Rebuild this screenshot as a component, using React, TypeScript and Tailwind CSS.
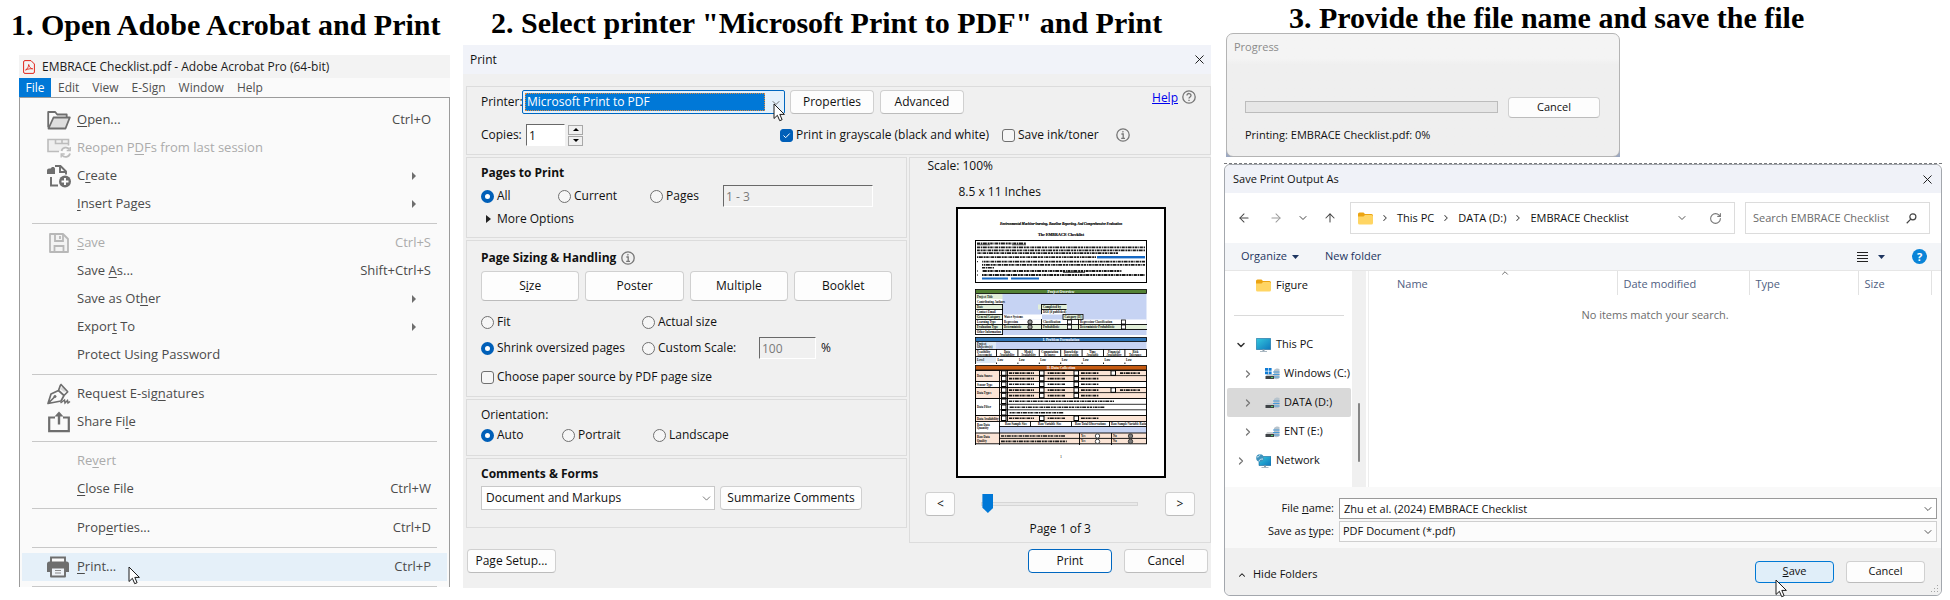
import React from "react";
import { ArrowLeft, ArrowRight, ArrowUp, ChevronDown, ChevronRight, ChevronUp, RotateCw, X } from "lucide-react";

/* ---------- shared pieces ---------- */

function StepTitle({ children, className }: { children: React.ReactNode; className: string }) {
  return (
    <h2 className={`whitespace-nowrap font-['Liberation_Serif',serif] text-[30px] leading-8 font-bold text-black ${className}`}>
      {children}
    </h2>
  );
}

function Cursor({ className }: { className: string }) {
  return (
    <svg viewBox="0 0 13 19" className={`pointer-events-none absolute h-[19px] w-[13px] ${className}`} aria-hidden="true">
      <path d="M1 1v14.5l3.4-3.2 2.3 5.4 2.4-1-2.3-5.3h4.6z" fill="#fff" stroke="#1b1b1b" strokeWidth="1" />
    </svg>
  );
}

function PushButton({ children, className = "" }: { children: React.ReactNode; className?: string }) {
  return (
    <button
      type="button"
      className={`shrink-0 rounded-[4px] border border-[#d0d0d0] border-b-[#bcbcbc] bg-[#fdfdfd] text-center whitespace-nowrap ${className}`}
    >
      {children}
    </button>
  );
}

function InfoIcon({ mark = "i" }: { mark?: "i" | "?" }) {
  return (
    <svg viewBox="0 0 14 14" className="size-[14px] shrink-0" fill="none" stroke="#767676" aria-hidden="true">
      <circle cx="7" cy="7" r="6.2" strokeWidth="1.3" />
      {mark === "i" ? (
        <>
          <path d="M5.4 6h1.8v4.2M5.2 10.3h3.8" strokeWidth="1.3" />
          <circle cx="6.9" cy="3.8" r=".5" strokeWidth=".8" />
        </>
      ) : (
        <path d="M5 5.4c0-2.6 4-2.4 4 0 0 1.5-2 1.5-2 3.2M7 9.8V11" strokeWidth="1.3" />
      )}
    </svg>
  );
}

/* ---------- step 1: Acrobat file menu ---------- */

const FolderOpenIcon = () => (
  <svg viewBox="0 0 24 20" className="h-5 w-6" aria-hidden="true">
    <path d="M1.2 17.5V2h7l2 2.5h9.500v3" fill="#fafafa" stroke="#6e6e6e" strokeWidth="1.8" strokeLinejoin="round" />
    <path d="M1.5 18.5 6.5 7.5h16.300l-4.300 11z" fill="#dedede" stroke="#6e6e6e" strokeWidth="1.8" strokeLinejoin="round" />
  </svg>
);

const ReopenIcon = () => (
  <svg viewBox="0 0 24 20" className="h-5 w-6" fill="none" stroke="#bcbcbc" aria-hidden="true">
    <path d="M12 13.5H1v-12h20.5v6" fill="#efefef" strokeWidth="1.6" />
    <path d="M8.5 1.5v4h13M15 1.500v4" strokeWidth="1.6" />
    <path d="M14.5 13a4.500 4.500 0 0 1 8-1.500M23 15.5a4.500 4.500 0 0 1-8 1.500" strokeWidth="1.8" />
    <path d="M23.2 9v3.500h-3.500M14.2 19.5V16h3.500" strokeWidth="1.4" />
  </svg>
);

const CreateIcon = () => (
  <svg viewBox="0 0 24 24" className="size-6" fill="none" stroke="#6e6e6e" aria-hidden="true">
    <path d="M0 6.5a2 2 0 0 1 2-2h1.500L5 3h2l1 1.500V10H0z" fill="#6e6e6e" stroke="none" />
    <path d="M8 2h5.500L19 7.500v3M13 2v6h6M4 13v8.500h7" strokeWidth="1.9" />
    <circle cx="18" cy="17.5" r="6" fill="#6e6e6e" stroke="none" />
    <path d="M18 14v7M14.500 17.5h7" stroke="#fff" strokeWidth="1.9" />
  </svg>
);

const FloppyIcon = () => (
  <svg viewBox="0 0 20 20" className="ml-0.5 size-5" fill="none" stroke="#b8b8b8" strokeWidth="1.8" aria-hidden="true">
    <path d="M1 1h13l5 5v13H1z" fill="#f3f3f3" strokeLinejoin="round" />
    <path d="M6 1v7h8V1M11 3v3M5.5 19v-6h9v6" />
  </svg>
);

const SignIcon = () => (
  <svg viewBox="0 0 24 22" className="h-[22px] w-6" fill="none" stroke="#6e6e6e" aria-hidden="true">
    <path d="m16 3 4 5-3 1-4-3z" fill="#d8d8d8" stroke="none" />
    <path d="M1 20.5 4 11l7.500-3.500 5.500 5-3 5.500zM1 20.5 7.500 14M11.5 7.5l2-5.500M17 12.500l4-4M13.5 1l7.500 8" strokeWidth="1.7" strokeLinejoin="round" />
    <circle cx="8" cy="13.5" r="1.2" fill="#6e6e6e" strokeWidth=".6" />
    <path d="m13.5 20 4-3 .5 3 2.500-2.500.5 2.500 2-1.500" strokeWidth="1.5" />
  </svg>
);

const ShareIcon = () => (
  <svg viewBox="0 0 24 22" className="h-[22px] w-6" fill="none" stroke="#6e6e6e" aria-hidden="true">
    <path d="M8 6.5H2.200v13.700h19.600V6.500H16" strokeWidth="2.200" />
    <path d="M12 13.5V3" strokeWidth="2.4" />
    <path d="M7.5 5.5 12 .5l4.500 5z" fill="#6e6e6e" stroke="none" />
  </svg>
);

const PrinterIcon = () => (
  <svg viewBox="0 0 22 22" className="size-[22px]" aria-hidden="true">
    <path d="M4 6V1.500h14V6" fill="#fafafa" stroke="#6e6e6e" strokeWidth="1.9" />
    <path d="M0 8a2.500 2.500 0 0 1 2.500-2.500h17A2.500 2.500 0 0 1 22 8v8h-3.500v-4h-15v4H0z" fill="#6e6e6e" />
    <path d="M4 11.5h14v9H4z" fill="#eef3f8" stroke="#6e6e6e" strokeWidth="1.9" strokeLinejoin="round" />
    <path d="M8 14.5h6M8 17h6" stroke="#8a8a8a" strokeWidth="1.2" />
  </svg>
);

type Item = { pre?: string; key?: string; post: string; combo?: string; sub?: boolean; off?: boolean; icon?: React.ReactNode };

const fileMenu: Item[][] = [
  [
    { key: "O", post: "pen...", combo: "Ctrl+O", icon: <FolderOpenIcon /> },
    { pre: "Reopen P", key: "D", post: "Fs from last session", off: true, icon: <ReopenIcon /> },
    { pre: "C", key: "r", post: "eate", sub: true, icon: <CreateIcon /> },
    { key: "I", post: "nsert Pages", sub: true },
  ],
  [
    { key: "S", post: "ave", combo: "Ctrl+S", off: true, icon: <FloppyIcon /> },
    { pre: "Save ", key: "A", post: "s...", combo: "Shift+Ctrl+S" },
    { pre: "Save as Ot", key: "h", post: "er", sub: true },
    { pre: "Expor", key: "t", post: " To", sub: true },
    { post: "Protect Using Password" },
  ],
  [
    { pre: "Request E-sig", key: "n", post: "atures", icon: <SignIcon /> },
    { pre: "Share Fi", key: "l", post: "e", icon: <ShareIcon /> },
  ],
  [
    { pre: "Re", key: "v", post: "ert", off: true },
    { key: "C", post: "lose File", combo: "Ctrl+W" },
  ],
  [{ pre: "Prop", key: "e", post: "rties...", combo: "Ctrl+D" }],
  [{ key: "P", post: "rint...", combo: "Ctrl+P", icon: <PrinterIcon /> }],
];

function MenuRow({ item }: { item: Item }) {
  const active = item.combo === "Ctrl+P";
  return (
    <button
      type="button"
      disabled={item.off}
      className={`relative mx-0.5 flex h-7 items-center pl-[25px] pr-4 text-left ${active ? "bg-[#e5f0f9]" : ""} ${item.off ? "text-[#ababab]" : "text-[#4b4b4b]"}`}
    >
      <span className="flex w-[30px] shrink-0 items-center">{item.icon}</span>
      <span className="flex-1 whitespace-pre">
        {item.pre}
        {item.key && <u className="underline-offset-2">{item.key}</u>}
        {item.post}
      </span>
      {item.combo && <span>{item.combo}</span>}
      {item.sub && (
        <svg viewBox="0 0 4 8" className="mr-[15px] h-2 w-1" aria-hidden="true">
          <path d="M0 0v8l4-4z" fill="#6e6e6e" />
        </svg>
      )}
      {active && <Cursor className="left-[106px] top-[13px]" />}
    </button>
  );
}

function AcrobatMenu() {
  return (
    <div className="ml-2 bg-[#fafafa]">
      <div className="flex h-[23px] items-center gap-[7px] bg-[#f3f3f3] pl-1 text-[12px] text-[#1b1b1b]">
        <svg viewBox="0 0 12 14" className="h-[14px] w-3" fill="none" stroke="#e1251b" aria-hidden="true">
          <path d="M2 .6h6L11.400 4v8a1.400 1.400 0 0 1-1.400 1.400H2A1.400 1.400 0 0 1 .6 12V2A1.400 1.400 0 0 1 2 .6z" />
          <path d="M2.500 10c2-1 3-3 3.200-5.500.6 2.500 2 4.200 4 4.300-2.500-.3-4.700.2-7.200 1.200z" strokeWidth=".9" strokeLinejoin="round" />
        </svg>
        <span className="whitespace-nowrap">EMBRACE Checklist.pdf - Adobe Acrobat Pro (64-bit)</span>
      </div>
      <nav className="flex h-[19px] gap-[13px] text-[12px] text-[#505050]">
        <button type="button" className="-mr-1.5 w-8 bg-[#0078d7] text-white">File</button>
        <button type="button">Edit</button>
        <button type="button">View</button>
        <button type="button">E-Sign</button>
        <button type="button">Window</button>
        <button type="button">Help</button>
      </nav>
      <div className="flex flex-col border-x border-t border-[#9b9b9b] pt-2 text-[13px]">
        {fileMenu.map((group, i) => (
          <React.Fragment key={i}>
            {group.map((item) => (
              <MenuRow key={item.post} item={item} />
            ))}
            <hr className={`mx-3 mt-[5px] border-[#c8c8c8] ${i === fileMenu.length - 1 ? "" : "mb-[5px]"}`} />
          </React.Fragment>
        ))}
      </div>
    </div>
  );
}

/* ---------- step 2: print dialog ---------- */

function Radio({ name, label, checked, className = "" }: { name: string; label: string; checked?: boolean; className?: string }) {
  return (
    <label className={`flex items-center gap-[3px] whitespace-nowrap ${className}`}>
      <input
        type="radio"
        name={name}
        defaultChecked={checked}
        className="size-[13px] shrink-0 appearance-none rounded-full border border-[#707070] bg-[#f6f6f6] checked:border-4 checked:border-[#005fb8] checked:bg-white"
      />
      {label}
    </label>
  );
}

function Check({ label, checked, className = "" }: { label: string; checked?: boolean; className?: string }) {
  return (
    <label className={`relative flex items-center gap-[3px] whitespace-nowrap ${className}`}>
      <input
        type="checkbox"
        defaultChecked={checked}
        className="peer size-[13px] shrink-0 appearance-none rounded-[3px] border border-[#707070] bg-[#f6f6f6] checked:border-[#005fb8] checked:bg-[#005fb8]"
      />
      <svg viewBox="0 0 13 13" className="pointer-events-none absolute left-0 hidden size-[13px] peer-checked:block" aria-hidden="true">
        <path d="m3.5 6.5 2.200 2.200 4-4.200" fill="none" stroke="#fff" />
      </svg>
      {label}
    </label>
  );
}

function Group({ children, className = "" }: { children: React.ReactNode; className?: string }) {
  return <div className={`border border-[#dcdcdc] px-3.5 ${className}`}>{children}</div>;
}

const sunken = "border border-r-white border-b-white border-t-[#696969] border-l-[#696969] px-0.5 leading-none";

/* Word-like dashes that stand for body copy too small to read. */
function Copy({ x1, x2, y, w = 1.8, color = "#1a1a1a", seed = 0 }: { x1: number; x2: number; y: number; w?: number; color?: string; seed?: number }) {
  return (
    <line x1={x1} x2={x2} y1={y} y2={y} stroke={color} strokeWidth={w} strokeDasharray="3 .7 1.500 .6 4 .8 2 .6 2.500 .8 1 .6" strokeDashoffset={seed} />
  );
}

const labelRows = [
  ["Project Title", 87, "#e2efd9"],
  ["Contributing Authors", 92, "#ffffff"],
  ["Date", 97, "#e2efd9"],
  ["Contact Email", 102, "#ffffff"],
  ["General Category", 107, "#e2efd9"],
  ["Learning Type", 112, "#ffffff"],
  ["Evaluation Type", 117, "#e2efd9"],
  ["Other Information", 122, "#ffffff"],
] as const;

const problemCells = ["Data Availability", "Model Availability", "Computation Resource", "Knowledge Integration", "Time Available", "Financial Availability", "Risk Tolerance"];

const dataRows = [
  { y: 163, h: 11, label: "Data Source", fill: "#fbe4d5", lines: [165.8, 171.3] },
  { y: 174, h: 6, label: "Sensor Type", fill: "#ffffff", lines: [177] },
  { y: 180, h: 11, label: "Data Types", fill: "#fbe4d5", lines: [182.8, 188.3] },
  { y: 191, h: 17, label: "Data Filter", fill: "#ffffff", lines: [194, 200, 205.5] },
  { y: 208, h: 6, label: "Data Availability", fill: "#fbe4d5", lines: [211] },
];

function PagePreview() {
  return (
    <svg viewBox="0 0 210 271" className="block w-full" fontFamily="Liberation Serif, serif" fontWeight="bold" fontSize="3.6" role="img" aria-label="Page preview">
      <rect x="1" y="1" width="208" height="269" fill="#fff" stroke="#000" strokeWidth="2" />
      <g stroke="#000" strokeWidth=".15">
        <text x="105" y="17.5" textAnchor="middle" fontStyle="italic" fontSize="3.4">Environmental Machine-learning, Baseline Reporting, And Comprehensive Evaluation</text>
        <text x="105" y="29" textAnchor="middle" fontSize="4.1">The EMBRACE Checklist</text>
      </g>

      <rect x="19.5" y="33.5" width="171" height="42" fill="none" stroke="#000" />
      <Copy x1={21} x2={70} y={36.5} />
      <path d="M21 37.8h13M56 37.8h14" stroke="#000" strokeWidth=".6" />
      <Copy x1={21} x2={189} y={40.4} />
      <Copy x1={21} x2={189} y={43.3} seed={7} />
      <Copy x1={21} x2={162} y={46.2} seed={12} />
      <Copy x1={21} x2={140} y={50.2} seed={4} />
      <rect x="141" y="49" width="48" height="2.4" fill="#1568c4" />
      <Copy x1={26} x2={189} y={54.7} seed={9} />
      <Copy x1={26} x2={189} y={57.8} seed={2} />
      <Copy x1={26} x2={38} y={60.7} w={1.5} />
      <Copy x1={26} x2={166} y={64} seed={5} />
      <path d="M107 65.3h22" stroke="#000" strokeWidth=".8" />
      <Copy x1={26} x2={189} y={68} seed={11} />
      <rect x="26" y="70.500" width="26" height="2" fill="#1568c4" />
      <rect x="55" y="70.500" width="28" height="2" fill="#1568c4" />
      <path d="M21 54.7h1M21 64h1M21 68h1" stroke="#000" />

      <rect x="19.5" y="82.5" width="171" height="4" fill="#548235" stroke="#000" strokeWidth=".8" />
      <text x="105" y="86" textAnchor="middle" fill="#fff">Project Overview</text>
      <rect x="20" y="87" width="170.5" height="41" fill="#c6d3f3" />
      <rect x="46" y="107.5" width="40" height="5" fill="#fff" />
      <rect x="82" y="97.5" width="29" height="5" fill="#e2efd9" />
      <rect x="86" y="102.5" width="25" height="5" fill="#fff" />
      <rect x="46" y="112.5" width="144.5" height="5" fill="#fff" />
      <rect x="46" y="117.5" width="144.5" height="5" fill="#e2efd9" />
      <rect x="107" y="107.5" width="20" height="5" fill="#e2efd9" stroke="#000" strokeWidth=".8" />
      {labelRows.map(([label, y, fill]) => (
        <g key={label}>
          <rect x="19.5" y={y} width="27" height="5.5" fill={fill} />
          <text x="21" y={y + 3.8} fontSize="3">{label}</text>
        </g>
      ))}
      <path d="M19.5 87v41M46.5 97v31M20 97.5h27M20 102.5h27M20 107.5h27M20 112.5h27M20 117.5h171M20 122.5h171M20 127.5h27M85.5 97v10M85.5 97.5h25M85.5 102.5h25M85.5 112v10M122.5 112v10" stroke="#000" strokeWidth=".9" />
      <g fontSize="3">
        <text x="87" y="101.2">Completed by</text>
        <text x="87" y="106.2">DOI (if published)</text>
        <text x="48" y="111.2">Water Systems</text>
        <text x="108.5" y="111.2">Category (II)</text>
        <text x="48" y="116.2">Regression</text>
        <text x="87" y="116.2">Classification</text>
        <text x="124" y="116.2">Regression-Classification</text>
        <text x="48" y="121.2">Deterministic</text>
        <text x="87" y="121.2">Probabilistic</text>
        <text x="124" y="121.2">Deterministic-Probabilistic</text>
      </g>
      <g fill="#fff" stroke="#000" strokeWidth=".8">
        <circle cx="74" cy="115" r="2.200" fill="#999" />
        <circle cx="74" cy="120" r="2.200" fill="#999" />
        <rect x="111.5" y="113" width="4" height="4" />
        <rect x="111.5" y="118" width="4" height="4" />
        <rect x="165.5" y="113" width="4" height="4" />
        <rect x="165.5" y="118" width="4" height="4" />
      </g>

      <rect x="19.5" y="130.5" width="171" height="4" fill="#2e74b5" stroke="#000" strokeWidth=".8" />
      <text x="105" y="134" textAnchor="middle" fill="#fff">I. Problem Formulation</text>
      <rect x="20" y="135" width="170.5" height="7" fill="#c6d3f3" />
      <rect x="20" y="135" width="20" height="7" fill="#deeaf6" />
      <rect x="20" y="150" width="20" height="6" fill="#deeaf6" />
      <g fontSize="3">
        <text x="21" y="138">Project</text>
        <text x="21" y="141.2">Objective(s)</text>
        <text x="21" y="145.5">Feasibility</text>
        <text x="21" y="148.8">Assessment</text>
        <text x="21" y="154">Level</text>
        {problemCells.map((c, i) => {
          const [a, b] = c.split(" ");
          return (
            <g key={c}>
              <text x={51 + i * 21.4} y="145.5" textAnchor="middle">{a}</text>
              <text x={51 + i * 21.4} y="148.8" textAnchor="middle">{b}</text>
              <text x={41.5 + i * 21.4} y="154">Low</text>
              <path d={`M${40.5 + i * 21.4} 142v7.500m0 6v1.500`} stroke="#000" strokeWidth=".9" />
            </g>
          );
        })}
      </g>
      <path d="M19.5 142.5h171M19.5 149.5h171M19.5 135v22M190.5 142v8" stroke="#000" strokeWidth=".9" />

      <rect x="19.5" y="158.5" width="171" height="4.5" fill="#c55a11" stroke="#000" strokeWidth=".8" />
      <text x="105" y="162.2" textAnchor="middle" fill="#fff">II. Data Collection</text>
      {dataRows.map((row) => (
        <g key={row.label}>
          <rect x="19.5" y={row.y + 0.5} width="171" height={row.h} fill={row.fill} stroke="#000" strokeWidth=".9" />
          <text x="21" y={row.y + row.h / 2 + 1.5} fontSize="3">{row.label}</text>
          {row.lines.map((y, i) => (
            <g key={y}>
              {i > 0 && <path d={`M43.5 ${y - 2.7}h147`} stroke="#000" strokeWidth=".8" />}
              <rect x="45.5" y={y - 2} width="4.5" height="4.5" fill="#fff" stroke="#000" />
              {row.h === 17 ? (
                <Copy x1={53} x2={i === 0 ? 158 : i === 1 ? 149 : 108} y={y + 0.3} w={1.6} seed={i * 5} />
              ) : (
                <>
                  <Copy x1={53} x2={78} y={y + 0.3} w={1.6} />
                  <rect x="83.5" y={y - 2} width="4.5" height="4.5" fill="#fff" stroke="#000" />
                  <Copy x1={91} x2={109} y={y + 0.3} w={1.6} seed={3} />
                  <rect x="118" y={y - 2} width="4.5" height="4.5" fill="#fff" stroke="#000" />
                  <Copy x1={125} x2={143} y={y + 0.3} w={1.6} seed={6} />
                  {i === 0 && row.h === 11 && (
                    <>
                      <rect x="155" y={y - 2} width="4.5" height="4.5" fill="#fff" stroke="#000" />
                      <Copy x1={164} x2={184} y={y + 0.3} w={1.6} />
                    </>
                  )}
                </>
              )}
            </g>
          ))}
        </g>
      ))}
      <rect x="43.5" y="219.5" width="147" height="6.5" fill="#c6d3f3" />
      <path d="M43.5 163v74M51.5 163v51M190.5 163v74M19.5 163v75M74.5 214v5.500M115.5 214v5.500M153.5 214v5.500M43.5 219.5h147" stroke="#000" strokeWidth=".9" />
      <g fontSize="3">
        <text x="49" y="218.2">Raw Sample Size</text>
        <text x="82" y="218.2">Raw Variable Size</text>
        <text x="119" y="218.2">Raw Total Observations</text>
        <text x="155" y="218.2">Raw Sample/Variable Ratio</text>
        <text x="21" y="218.5">Raw Data</text>
        <text x="21" y="222">Quantity</text>
      </g>
      <rect x="19.5" y="226" width="171" height="10.8" fill="#fbe4d5" stroke="#000" strokeWidth=".9" />
      <path d="M43.5 226v12M43.5 231.4h147M123.5 226v12M155.5 226v12" stroke="#000" strokeWidth=".9" />
      <g fontSize="3">
        <text x="21" y="231">Raw Data</text>
        <text x="21" y="234.5">Quality</text>
        <text x="125" y="230">Yes</text>
        <text x="157" y="230">No</text>
        <text x="125" y="235.4">Yes</text>
        <text x="157" y="235.4">No</text>
      </g>
      <Copy x1={45} x2={109} y={229} w={1.6} />
      <Copy x1={45} x2={111} y={234.4} w={1.6} seed={6} />
      <g fill="#fff" stroke="#333" strokeWidth=".9">
        <circle cx="141.5" cy="229" r="2.2" />
        <circle cx="141.5" cy="234.4" r="2.2" />
        <circle cx="174.5" cy="229" r="2.2" fill="#777" />
        <circle cx="174.5" cy="234.4" r="2.2" fill="#777" />
      </g>
      <text x="104" y="251" fontSize="4" fontWeight="normal">1</text>
    </svg>
  );
}

function PrintDialog() {
  return (
    <div className="bg-[#f0f0f0] text-[12px] text-[#111]">
      <div className="flex h-[29px] items-center justify-between bg-[#f1f3f9] pl-[7px] pr-1">
        <span>Print</span>
        <button type="button" aria-label="Close"><X size={15} strokeWidth={1.5} /></button>
      </div>
      <div className="flex flex-col gap-0.5 pt-3 pl-[3px]">
        <Group className="pt-0.5 pb-2">
          <div className="flex h-[25px] items-center">
            <label htmlFor="printer" className="w-[41px] shrink-0 whitespace-nowrap">Printer:</label>
            <div className="relative flex h-6 w-[263px] items-center rounded-[2px] border border-[#0067c0] bg-[#e5f1fb] px-0.5">
              <select id="printer" className="h-[18px] w-[240px] appearance-none bg-[#0078d7] pl-0.5 leading-none text-white outline outline-1 -outline-offset-1 outline-dotted outline-[#e08a3c]">
                <option>Microsoft Print to PDF</option>
              </select>
              <ChevronDown size={12} strokeWidth={1.5} className="absolute right-0.5 top-1.5 text-[#444]" />
              <Cursor className="-right-[2px] top-[12px]" />
            </div>
            <PushButton className="ml-[5px] h-6 w-[84px]">Properties</PushButton>
            <PushButton className="ml-1.5 h-6 w-[84px]">Advanced</PushButton>
            <a href="#help" className="ml-auto mb-2 text-[#0000ee] underline">Help</a>
            <span className="mb-2.5 ml-1"><InfoIcon mark="?" /></span>
          </div>
          <div className="mt-2.5 flex h-[22px] items-center">
            <label htmlFor="copies" className="w-[45px] shrink-0 whitespace-nowrap">Copies:</label>
            <input id="copies" defaultValue="1" className={`h-[22px] w-[39px] bg-white ${sunken}`} />
            <div className="ml-[3px] flex flex-col gap-px">
              <button type="button" aria-label="More copies" className="flex h-2.5 w-[15px] items-center justify-center border border-[#a8a8a8]">
                <svg viewBox="0 0 6 3" className="h-[3px] w-1.5"><path d="M0 3h6L3 0z" /></svg>
              </button>
              <button type="button" aria-label="Fewer copies" className="flex h-2.5 w-[15px] items-center justify-center border border-[#a8a8a8]">
                <svg viewBox="0 0 6 3" className="h-[3px] w-1.5"><path d="M0 0h6L3 3z" /></svg>
              </button>
            </div>
            <Check label="Print in grayscale (black and white)" checked className="ml-[197px] w-[222px]" />
            <Check label="Save ink/toner" className="w-[114px]" />
            <InfoIcon />
          </div>
        </Group>

        <div className="grid grid-cols-[442fr_302fr] gap-0.5">
          <div className="flex flex-col gap-0.5">
            <Group className="pt-[5px] pb-[7px]">
              <h3 className="leading-5 font-bold">Pages to Print</h3>
              <div className="mt-px flex h-6 items-center">
                <Radio name="range" label="All" checked className="w-[77px]" />
                <Radio name="range" label="Current" className="w-[92px]" />
                <Radio name="range" label="Pages" className="w-[73px]" />
                <input aria-label="Page range" disabled defaultValue="1 - 3" className={`h-[22px] w-[150px] text-[#7a7a7a] ${sunken}`} />
              </div>
              <button type="button" className="flex h-[22px] items-center gap-1.5 pl-[5px]">
                <svg viewBox="0 0 5 8" className="h-2 w-[5px]"><path d="M0 0v8l5-4z" fill="#222" /></svg>
                More Options
              </button>
            </Group>

            <Group className="pt-[7px] pb-[7px]">
              <h3 className="flex items-center gap-[5px] leading-5 font-bold">
                Page Sizing &amp; Handling <InfoIcon />
              </h3>
              <div className="mt-[3px] grid grid-cols-4 gap-1.5">
                <PushButton className="h-[30px]">S<u>i</u>ze</PushButton>
                <PushButton className="h-[30px]">Poster</PushButton>
                <PushButton className="h-[30px]">Multiple</PushButton>
                <PushButton className="h-[30px]">Booklet</PushButton>
              </div>
              <div className="mt-[9px] flex h-6 items-center">
                <Radio name="size" label="Fit" className="w-[161px]" />
                <Radio name="size" label="Actual size" />
              </div>
              <div className="mt-0.5 flex h-6 items-center">
                <Radio name="size" label="Shrink oversized pages" checked className="w-[161px]" />
                <Radio name="size" label="Custom Scale:" className="w-[117px]" />
                <input aria-label="Scale percent" disabled defaultValue="100" className={`h-[22px] w-[57px] text-[#7a7a7a] ${sunken}`} />
                <span className="ml-[5px]">%</span>
              </div>
              <Check label="Choose paper source by PDF page size" className="mt-[5px] h-6" />
            </Group>

            <Group className="pt-[5px] pb-2.5">
              <div className="leading-5">Orientation:</div>
              <div className="flex h-5 items-center">
                <Radio name="orient" label="Auto" checked className="w-[81px]" />
                <Radio name="orient" label="Portrait" className="w-[91px]" />
                <Radio name="orient" label="Landscape" />
              </div>
            </Group>

            <Group className="pt-[5px] pb-[17px]">
              <h3 className="leading-5 font-bold">Comments &amp; Forms</h3>
              <div className="mt-px flex h-[25px] items-center gap-[5px]">
                <div className="relative">
                  <select aria-label="Comments and forms" className="block h-6 w-[234px] appearance-none border border-[#c8c8c8] bg-white pl-1 leading-none">
                    <option>Document and Markups</option>
                  </select>
                  <ChevronDown size={13} strokeWidth={1.3} className="pointer-events-none absolute right-0.5 top-1.5 text-[#444]" />
                </div>
                <PushButton className="h-6 w-[142px]">Summarize Comments</PushButton>
              </div>
            </Group>
          </div>

          <div className="border border-[#dcdcdc] px-[15px] pb-[3px]">
            <div className="pl-0.5 leading-4">Scale: 100%</div>
            <div className="mt-2.5 pl-[33px] leading-4">8.5 x 11 Inches</div>
            <div className="mt-[7px] ml-[31px] w-[210px]">
              <PagePreview />
            </div>
            <div className="mt-3.5 flex h-6 items-center justify-between">
              <PushButton className="h-6 w-[30px]">&lt;</PushButton>
              <input
                type="range"
                aria-label="Preview page"
                min={1}
                max={3}
                defaultValue={1}
                className="mr-[27px] ml-[26px] h-5 min-w-0 flex-1 appearance-none bg-transparent [&::-webkit-slider-runnable-track]:h-1 [&::-webkit-slider-runnable-track]:border [&::-webkit-slider-runnable-track]:border-[#d6d6d6] [&::-webkit-slider-runnable-track]:bg-[#e9e9e9] [&::-webkit-slider-thumb]:-mt-[9px] [&::-webkit-slider-thumb]:h-[19px] [&::-webkit-slider-thumb]:w-[11px] [&::-webkit-slider-thumb]:appearance-none [&::-webkit-slider-thumb]:bg-[#0078d7] [&::-webkit-slider-thumb]:[clip-path:polygon(0_0,100%_0,100%_72%,50%_100%,0_72%)]"
              />
              <PushButton className="h-6 w-[30px]">&gt;</PushButton>
            </div>
            <div className="mt-[3px] text-center leading-5">Page 1 of 3</div>
          </div>
        </div>
      </div>
      <div className="flex items-center pt-1.5 pr-[3px] pb-[15px] pl-1">
        <PushButton className="h-6 w-[89px]">Page Setup...</PushButton>
        <PushButton className="ml-auto h-6 w-[84px] !border-[#0067c0]">Print</PushButton>
        <PushButton className="ml-3 h-6 w-[84px]">Cancel</PushButton>
      </div>
    </div>
  );
}

/* ---------- step 3: progress and save dialogs ---------- */

function ProgressDialog() {
  return (
    <div className="ml-0.5 w-[394px] bg-linear-to-b from-white from-60% to-[#9aa6bf] text-[11px] text-[#111]">
      <div className="rounded-[7px] border border-[#b4b4b4] bg-linear-to-b from-[#f4f4f4] from-20% to-[#efefef] to-25% pt-[5px] pr-[19px] pb-[13px] pl-[18px]">
        <div className="-ml-[11px] leading-4 text-[#8b8b8b]">Progress</div>
        <div className="mt-[41px] flex h-[22px] items-center justify-between">
          <div role="progressbar" aria-valuenow={0} aria-label="Printing" className="h-3 w-[253px] border border-[#bcbcbc] bg-[#e6e6e6]" />
          <PushButton className="h-[21px] w-[92px]">Cancel</PushButton>
        </div>
        <div className="mt-[9px] leading-4">Printing: EMBRACE Checklist.pdf: 0%</div>
      </div>
    </div>
  );
}

const FolderIcon = () => (
  <svg viewBox="0 0 15 13" className="h-[13px] w-[15px] shrink-0" aria-hidden="true">
    <path d="M0 2A1.500 1.500 0 0 1 1.500.5h4L7 2h6.500A1.500 1.500 0 0 1 15 3.500V6H0z" fill="#eca412" />
    <path d="M0 4.500h5.500L7 3h6.500A1.500 1.500 0 0 1 15 4.500V11a1.500 1.500 0 0 1-1.500 1.500h-12A1.500 1.500 0 0 1 0 11z" fill="#ffd563" />
  </svg>
);

const MonitorIcon = ({ net }: { net?: boolean }) => (
  <svg viewBox="0 0 15 14" className="h-[14px] w-[15px] shrink-0" aria-hidden="true">
    <defs>
      <linearGradient id="screen" x1="0" y1="0" x2="1" y2="1">
        <stop offset="0" stopColor="#34c8de" />
        <stop offset="1" stopColor="#0f78bd" />
      </linearGradient>
    </defs>
    <path d={net ? "M3 2.500h12v9H3z" : "M.3.5h14.400v11H.3z"} fill="url(#screen)" stroke="#14679b" strokeWidth=".6" />
    <path d={net ? "M8 11.500h2v1.500h2.500v.8h-7V13H8z" : "M6.500 11.500h2V13H11v.8H4V13h2.500z"} fill="#8da0ad" />
    {net && (
      <>
        <circle cx="4" cy="4" r="3.8" fill="#3f93bd" />
        <path d="M1 3c2 0 2.500-1 3-2.500M3 7.500c0-2 2-2.500 4-2.500" stroke="#cfe8f3" fill="none" />
      </>
    )}
  </svg>
);

const DriveIcon = ({ win }: { win?: boolean }) => (
  <svg viewBox="0 0 15 12" className="h-3 w-[15px] shrink-0" aria-hidden="true">
    <path d="M2 6h8l-1 2H1z" fill="#c9cdd0" />
    <path d="M.5 8H9v3H.5z" fill="#3f4346" />
    <path d="M6 9h2v1H6z" fill="#4fd06a" />
    <path d="M9 2c1-1.500 4-2 5.500-1v9c-1.500 1.500-4 1.500-5.500.5z" fill="#b7c3cc" />
    <path d="M8 4h6.500M8 6.500h6.500M9 9h5.500" stroke="#4a9bd8" />
    {win && <path d="M0 0h3v2.800H0zM3.600 0h3v2.800h-3zM0 3.400h3v2.800H0zM3.600 3.400h3v2.800h-3z" fill="#0f7bd4" />}
  </svg>
);

const tree = [
  { label: "Windows (C:)", icon: <DriveIcon win />, active: false },
  { label: "DATA (D:)", icon: <DriveIcon />, active: true },
  { label: "ENT (E:)", icon: <DriveIcon />, active: false },
];

function Crumb({ children }: { children: string }) {
  return (
    <>
      <ChevronRight size={10} strokeWidth={2.5} className="shrink-0 text-[#444]" />
      <span className="whitespace-nowrap">{children}</span>
    </>
  );
}

function SaveDialog() {
  return (
    <div className="mt-1.5 border-t border-dashed border-[#77797c]">
      <div className="rounded-[6px] border border-[#a3a7ad] bg-white text-[11px] text-[#111]">
        <div className="flex h-7 items-center justify-between rounded-t-[6px] bg-[#f0f2f8] pr-1.5 pl-2">
          <span>Save Print Output As</span>
          <button type="button" aria-label="Close"><X size={15} strokeWidth={1.5} /></button>
        </div>
        <div className="flex h-[50px] items-center pr-[11px] pl-3">
          <div className="flex w-[113px] shrink-0 items-center text-[#444]">
            <button type="button" aria-label="Back" className="w-8"><ArrowLeft size={14} strokeWidth={1.75} /></button>
            <button type="button" aria-label="Forward" className="w-7 text-[#999]"><ArrowRight size={14} strokeWidth={1.75} /></button>
            <button type="button" aria-label="Recent" className="w-[26px]"><ChevronDown size={12} strokeWidth={2} /></button>
            <button type="button" aria-label="Up"><ArrowUp size={14} strokeWidth={1.75} /></button>
          </div>
          <div className="flex h-8 min-w-0 flex-1 items-center gap-[7px] border border-[#dcdcdc] px-[7px]">
            <FolderIcon />
            <Crumb>This PC</Crumb>
            <Crumb>DATA (D:)</Crumb>
            <Crumb>EMBRACE Checklist</Crumb>
            <ChevronDown size={12} strokeWidth={2} className="ml-auto shrink-0 text-[#555]" />
            <button type="button" aria-label="Refresh" className="mr-[5px] ml-3.5"><RotateCw size={13} strokeWidth={2} className="text-[#777]" /></button>
          </div>
          <div className="ml-2.5 flex h-8 w-[185px] shrink-0 items-center border border-[#dcdcdc] pr-3 pl-[7px]">
            <input aria-label="Search" placeholder="Search EMBRACE Checklist" className="min-w-0 flex-1 placeholder:text-[#6b6b6b]" />
            <svg viewBox="0 0 12 12" className="size-[11px] shrink-0" fill="none" stroke="#444" strokeWidth="1.3" aria-hidden="true">
              <circle cx="7.5" cy="4.2" r="3.3" />
              <path d="M5.200 6.700.8 11.200" />
            </svg>
          </div>
        </div>
        <div className="flex h-7 items-center border-b border-[#e6e6e6] bg-[#f3f5f8] pr-3.5 pl-4 text-[#1e3560]">
          <button type="button" className="flex items-center gap-[5px]">
            Organize
            <svg viewBox="0 0 7 4" className="h-1 w-[7px]"><path d="M0 0h7L3.500 4z" fill="#1e3560" /></svg>
          </button>
          <button type="button" className="ml-[26px]">New folder</button>
          <button type="button" aria-label="View" className="ml-auto flex items-center gap-2.5">
            <svg viewBox="0 0 11 10" className="h-2.5 w-[11px]" stroke="#222"><path d="M0 .5h11M0 3.500h11M0 6.500h11M0 9.500h11" /></svg>
            <svg viewBox="0 0 7 4" className="h-1 w-[7px]"><path d="M0 0h7L3.500 4z" fill="#1e3560" /></svg>
          </button>
          <button type="button" aria-label="Help" className="ml-[27px] size-[15px] rounded-full bg-[#0a84d8] text-[11px] leading-[15px] font-bold text-white">?</button>
        </div>

        <div className="flex">
          <div className="w-[127px] shrink-0 pb-3">
            <div className="flex h-7 items-center gap-[5px] pl-[31px]"><FolderIcon />Figure</div>
            <hr className="mt-4 mr-2 ml-[9px] border-[#dadada]" />
            <div className="mt-3.5 flex h-[29px] items-center gap-[5px] pl-2.5">
              <ChevronDown size={12} strokeWidth={3} className="mr-1 text-[#333]" />
              <MonitorIcon />This PC
            </div>
            {tree.map((d) => (
              <div key={d.label} className={`mr-px ml-0.5 flex h-[29px] items-center gap-1 rounded-[2px] pl-[15px] whitespace-nowrap ${d.active ? "bg-[#d9d9d9]" : ""}`}>
                <ChevronRight size={12} strokeWidth={2.5} className="mr-[7px] shrink-0 text-[#777]" />
                {d.icon}
                {d.label}
              </div>
            ))}
            <div className="flex h-[29px] items-center gap-[5px] pl-2.5">
              <ChevronRight size={12} strokeWidth={2.5} className="mr-1 text-[#777]" />
              <MonitorIcon net />Network
            </div>
          </div>
          <div className="flex w-[14px] shrink-0 justify-center bg-[#f0f0f0] pt-[132px]">
            <div className="h-[59px] w-0.5 rounded bg-[#868686]" />
          </div>
          <div className="ml-0.5 min-w-0 flex-1 border-l border-[#ededed]">
            <table className="w-full table-fixed border-collapse text-left">
              <thead>
                <tr className="h-6 text-[#4f607f]">
                  <th scope="col" className="relative border-r border-[#e2e2e2] pt-0.5 pl-7 font-normal">
                    Name
                    <ChevronUp size={10} strokeWidth={2} className="absolute -top-[3px] left-[131px] text-[#555]" />
                  </th>
                  <th scope="col" className="w-[132px] border-r border-[#e2e2e2] pt-0.5 pl-1.5 font-normal">Date modified</th>
                  <th scope="col" className="w-[109px] border-r border-[#e2e2e2] pt-0.5 pl-1.5 font-normal">Type</th>
                  <th scope="col" className="w-[73px] border-r border-[#e2e2e2] pt-0.5 pl-1.5 font-normal">Size</th>
                  <td className="w-2.5" />
                </tr>
              </thead>
              <tbody>
                <tr>
                  <td colSpan={5} className="pt-3 text-center leading-4 text-[#6d6d6d]">No items match your search.</td>
                </tr>
              </tbody>
            </table>
          </div>
        </div>

        <div className="grid grid-cols-[109px_1fr] items-center gap-x-[5px] gap-y-[2px] bg-[#f9f9f9] pt-[11px] pr-1 pb-1.5">
          <label htmlFor="fname" className="text-right">File <u>n</u>ame:</label>
          <div className="relative">
            <input id="fname" defaultValue="Zhu et al. (2024) EMBRACE Checklist" className="block h-[21px] w-full border border-[#9a9a9a] bg-white pl-1" />
            <ChevronDown size={12} strokeWidth={2} className="pointer-events-none absolute top-[5px] right-[3px] text-[#555]" />
          </div>
          <label htmlFor="ftype" className="text-right">Save as <u>t</u>ype:</label>
          <div className="relative">
            <select id="ftype" className="block h-[21px] w-full appearance-none border border-[#cfcfcf] bg-[#fcfcfc] pl-[3px]">
              <option>PDF Document (*.pdf)</option>
            </select>
            <ChevronDown size={12} strokeWidth={2} className="pointer-events-none absolute top-[5px] right-[3px] text-[#555]" />
          </div>
        </div>
        <div className="relative flex h-[47px] items-center rounded-b-[6px] bg-[#f0f0f0] pr-4 pl-3">
          <button type="button" className="mt-1.5 flex items-center gap-1.5"><ChevronUp size={10} strokeWidth={2.5} />Hide Folders</button>
          <div className="relative ml-auto">
            <PushButton className="block h-[22px] w-[79px] !border-[#0078d4] !bg-[#e0eef9]"><u>S</u>ave</PushButton>
            <Cursor className="top-[18px] left-5" />
          </div>
          <PushButton className="ml-3 h-[22px] w-[79px]">Cancel</PushButton>
          <svg viewBox="0 0 8 8" className="absolute right-0.5 bottom-0.5 size-2" fill="#a5a5a5" aria-hidden="true">
            <path d="M6 0h1v1H6zM3 3h1v1H3zM6 3h1v1H6zM0 6h1v1H0zM3 6h1v1H3zM6 6h1v1H6z" />
          </svg>
        </div>
      </div>
    </div>
  );
}

export default function App() {
  return (
    <main className="grid min-h-screen grid-cols-[439fr_748fr_718fr] items-start gap-x-[13px] bg-white pr-2 pl-[11px] font-['Open_Sans','Noto_Sans',sans-serif]">
      <section className="min-w-0">
        <StepTitle className="pt-[9px] pb-[14px]">1. Open Adobe Acrobat and Print</StepTitle>
        <AcrobatMenu />
      </section>
      <section className="min-w-0">
        <StepTitle className="pt-[7px] pb-1.5 pl-7">2. Select printer "Microsoft Print to PDF" and Print</StepTitle>
        <PrintDialog />
      </section>
      <section className="min-w-0">
        <StepTitle className="-mb-px pt-0.5 pl-[65px]">3. Provide the file name and save the file</StepTitle>
        <ProgressDialog />
        <SaveDialog />
      </section>
    </main>
  );
}
